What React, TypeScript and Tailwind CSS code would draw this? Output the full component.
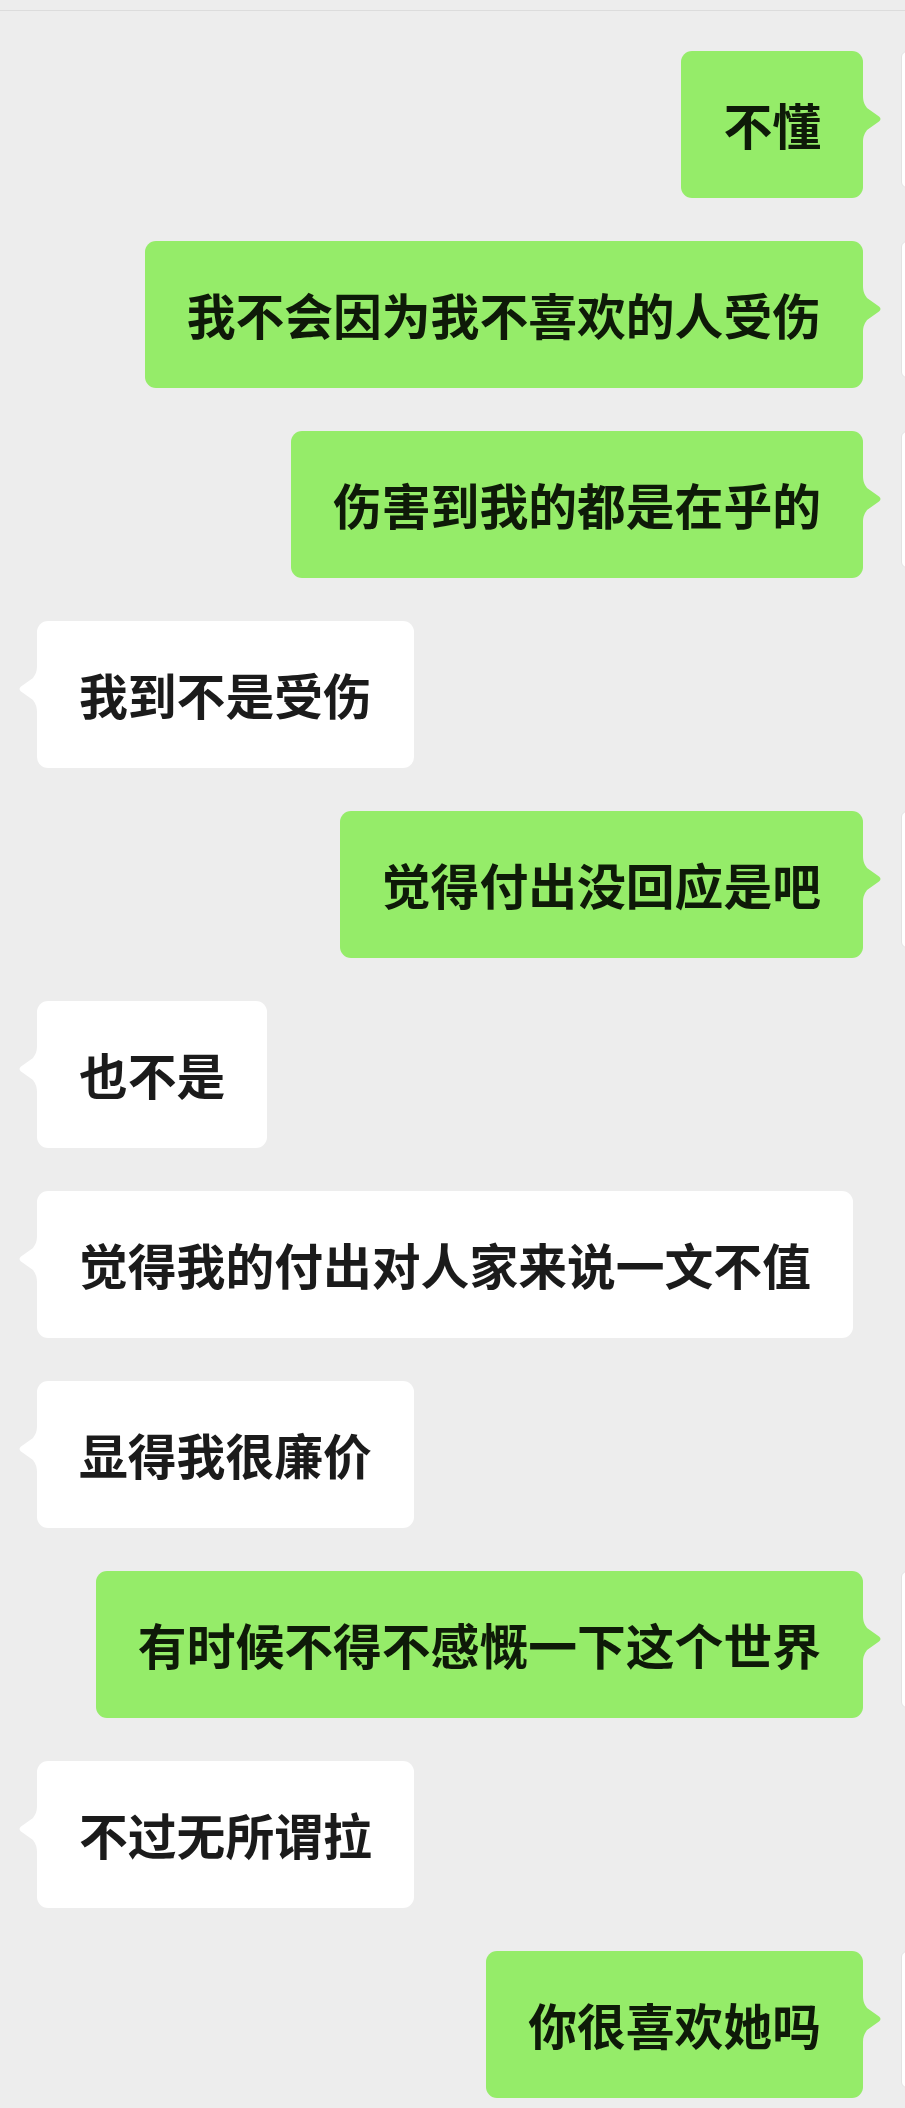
import React from 'react'

type Msg = { text: string; mine: boolean }

const messages: Msg[] = [
  { text: '不懂', mine: true },
  { text: '我不会因为我不喜欢的人受伤', mine: true },
  { text: '伤害到我的都是在乎的', mine: true },
  { text: '我到不是受伤', mine: false },
  { text: '觉得付出没回应是吧', mine: true },
  { text: '也不是', mine: false },
  { text: '觉得我的付出对人家来说一文不值', mine: false },
  { text: '显得我很廉价', mine: false },
  { text: '有时候不得不感慨一下这个世界', mine: true },
  { text: '不过无所谓拉', mine: false },
  { text: '你很喜欢她吗', mine: true },
]

// little pointer on the bubble edge
function Tail({ side, color }: { side: 'left' | 'right'; color: string }) {
  return (
    <svg
      width="21"
      height="46"
      viewBox="-2 0 21 46"
      className={`absolute top-[45px] ${side === 'right' ? 'right-[-19px]' : 'left-[-19px] -scale-x-100'}`}
    >
      <path
        d="M-2 0 L0 0 C0 6 2 9 4 12 L16 20.5 Q19 23 16 25.5 L4 34 C2 37 0 40 0 46 L-2 46 Z"
        fill={color}
      />
    </svg>
  )
}

function Bubble({ msg }: { msg: Msg }) {
  return (
    <div
      className={`relative h-[147px] flex items-center px-[42px] rounded-[11px] whitespace-nowrap font-bold text-[48.8px] leading-none ${
        msg.mine ? 'bg-[#95ec69] text-[#0e1a08]' : 'bg-white text-[#1b1b1b]'
      }`}
    >
      {msg.text}
      <Tail side={msg.mine ? 'right' : 'left'} color={msg.mine ? '#95ec69' : '#ffffff'} />
    </div>
  )
}

export default function App() {
  return (
    <div
      className="w-[905px] h-[2108px] overflow-hidden bg-[#ededed]"
      style={{ fontFamily: '"Noto Sans CJK SC", "Noto Sans", sans-serif' }}
    >
      <div className="h-[10px]" />
      <div className="h-px bg-[#dcdcdc]" />
      <div className="flex flex-col gap-[43px] pt-[40px]">
        {messages.map((m, i) =>
          m.mine ? (
            <div key={i} className="flex justify-end items-start">
              <Bubble msg={m} />
              {/* avatar, almost fully off-screen */}
              <div className="ml-[38px] w-[4px] h-[137px] overflow-hidden">
                <div className="w-[140px] h-full rounded-md bg-white border border-[#e2e2e2]" />
              </div>
            </div>
          ) : (
            <div key={i} className="flex justify-start items-start pl-[37px]">
              <Bubble msg={m} />
            </div>
          )
        )}
      </div>
    </div>
  )
}
